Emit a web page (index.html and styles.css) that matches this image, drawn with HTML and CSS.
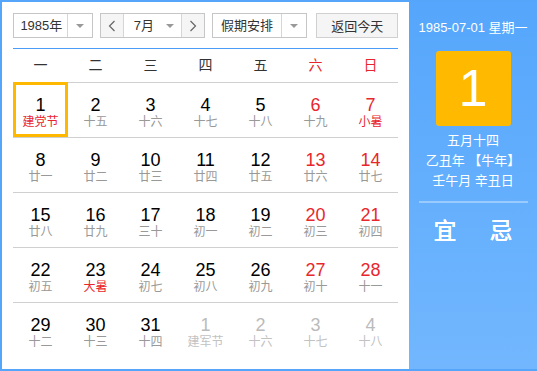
FILE: index.html
```html
<!DOCTYPE html>
<html lang="zh-CN">
<head>
    <meta charset="UTF-8">
    <meta name="viewport" content="width=device-width, initial-scale=1.0">
    <title>万年历</title>
    <link rel="stylesheet" href="styles.css">
</head>
<body>
    <div class="calendar">
        <div class="main">
            <div class="toolbar">
                <div class="select year-select">
                    <span class="select-text">1985年</span>
                    <span class="select-arrow"><i class="caret"></i></span>
                </div>
                <div class="month-group">
                    <button class="nav-btn">
                        <svg width="8" height="12" viewBox="0 0 8 12"><polyline points="6.5,1 1.5,6 6.5,11" fill="none" stroke="#666" stroke-width="1.2"/></svg>
                    </button>
                    <div class="month-select">
                        <span class="select-text">7月</span>
                        <i class="caret"></i>
                    </div>
                    <button class="nav-btn">
                        <svg width="8" height="12" viewBox="0 0 8 12"><polyline points="1.5,1 6.5,6 1.5,11" fill="none" stroke="#666" stroke-width="1.2"/></svg>
                    </button>
                </div>
                <div class="select holiday-select">
                    <span class="select-text">假期安排</span>
                    <span class="select-arrow"><i class="caret"></i></span>
                </div>
                <button class="today-btn">返回今天</button>
            </div>

            <div class="weekdays">
                <span>一</span><span>二</span><span>三</span><span>四</span><span>五</span>
                <span class="weekend">六</span><span class="weekend">日</span>
            </div>

            <div class="days">
                <div class="day today"><b>1</b><span class="lunar festival">建党节</span></div>
                <div class="day"><b>2</b><span class="lunar">十五</span></div>
                <div class="day"><b>3</b><span class="lunar">十六</span></div>
                <div class="day"><b>4</b><span class="lunar">十七</span></div>
                <div class="day"><b>5</b><span class="lunar">十八</span></div>
                <div class="day weekend"><b>6</b><span class="lunar">十九</span></div>
                <div class="day weekend"><b>7</b><span class="lunar festival">小暑</span></div>

                <div class="day"><b>8</b><span class="lunar">廿一</span></div>
                <div class="day"><b>9</b><span class="lunar">廿二</span></div>
                <div class="day"><b>10</b><span class="lunar">廿三</span></div>
                <div class="day"><b>11</b><span class="lunar">廿四</span></div>
                <div class="day"><b>12</b><span class="lunar">廿五</span></div>
                <div class="day weekend"><b>13</b><span class="lunar">廿六</span></div>
                <div class="day weekend"><b>14</b><span class="lunar">廿七</span></div>

                <div class="day"><b>15</b><span class="lunar">廿八</span></div>
                <div class="day"><b>16</b><span class="lunar">廿九</span></div>
                <div class="day"><b>17</b><span class="lunar">三十</span></div>
                <div class="day"><b>18</b><span class="lunar">初一</span></div>
                <div class="day"><b>19</b><span class="lunar">初二</span></div>
                <div class="day weekend"><b>20</b><span class="lunar">初三</span></div>
                <div class="day weekend"><b>21</b><span class="lunar">初四</span></div>

                <div class="day"><b>22</b><span class="lunar">初五</span></div>
                <div class="day"><b>23</b><span class="lunar festival">大暑</span></div>
                <div class="day"><b>24</b><span class="lunar">初七</span></div>
                <div class="day"><b>25</b><span class="lunar">初八</span></div>
                <div class="day"><b>26</b><span class="lunar">初九</span></div>
                <div class="day weekend"><b>27</b><span class="lunar">初十</span></div>
                <div class="day weekend"><b>28</b><span class="lunar">十一</span></div>

                <div class="day"><b>29</b><span class="lunar">十二</span></div>
                <div class="day"><b>30</b><span class="lunar">十三</span></div>
                <div class="day"><b>31</b><span class="lunar">十四</span></div>
                <div class="day other"><b>1</b><span class="lunar">建军节</span></div>
                <div class="day other"><b>2</b><span class="lunar">十六</span></div>
                <div class="day other"><b>3</b><span class="lunar">十七</span></div>
                <div class="day other"><b>4</b><span class="lunar">十八</span></div>
            </div>
        </div>

        <div class="side">
            <p class="side-date">1985-07-01 星期一</p>
            <div class="big-day">1</div>
            <p class="side-lunar">五月十四</p>
            <p class="side-lunar">乙丑年 【牛年】</p>
            <p class="side-lunar">壬午月 辛丑日</p>
            <div class="side-line"></div>
            <div class="yiji">
                <span>宜</span>
                <span>忌</span>
            </div>
        </div>
    </div>
</body>
</html>
```

FILE: styles.css
```css
body {
    margin: 0;
    padding: 0;
    font-family: "Liberation Sans", "Noto Sans CJK SC", sans-serif;
    background: #fff;
}
.calendar {
    display: flex;
    width: 537px;
    height: 371px;
    box-sizing: border-box;
    border: 2px solid #55a6fb;
    border-right: none;
    background: #fff;
}
.main {
    width: 407px;
    box-sizing: border-box;
    padding: 11px 11px 0 11px;
}
.toolbar {
    display: flex;
    height: 25px;
    padding-bottom: 10px;
    border-bottom: 1px solid #4a9cf6;
}
.select {
    display: flex;
    box-sizing: border-box;
    height: 25px;
    border: 1px solid #c6c6c6;
    background: #fff;
    font-size: 13px;
    color: #333;
}
.select-text {
    flex: 1;
    line-height: 23px;
    text-align: center;
}
.select-arrow {
    display: flex;
    align-items: center;
    justify-content: center;
    width: 24px;
    border-left: 1px solid #d6d6d6;
}
.caret {
    display: block;
    width: 0;
    height: 0;
    border-left: 4px solid transparent;
    border-right: 4px solid transparent;
    border-top: 4px solid #999;
}
.year-select {
    width: 80px;
}
.year-select .select-text {
    padding-left: 2px;
}
.month-group {
    display: flex;
    box-sizing: border-box;
    width: 105px;
    height: 25px;
    margin-left: 7px;
    border: 1px solid #c6c6c6;
}
.nav-btn {
    display: flex;
    align-items: center;
    justify-content: center;
    width: 22px;
    padding: 0;
    border: none;
    background: #f5f5f5;
}
.month-select {
    display: flex;
    align-items: center;
    width: 59px;
    box-sizing: border-box;
    padding: 0 7px 0 10px;
    border-left: 1px solid #d6d6d6;
    border-right: 1px solid #d6d6d6;
    background: #fff;
    font-size: 13px;
    color: #333;
}
.month-select .select-text {
    text-align: left;
}
.holiday-select {
    width: 96px;
    margin-left: 7px;
}
.today-btn {
    width: 82px;
    height: 25px;
    margin-left: 9px;
    padding: 0;
    border: 1px solid #d0d0d0;
    background: #f5f5f5;
    font-family: inherit;
    font-size: 13px;
    color: #333;
}
.weekdays {
    display: grid;
    grid-template-columns: repeat(7, 55px);
    height: 33px;
    line-height: 33px;
    text-align: center;
    font-size: 14px;
    color: #333;
}
.weekdays .weekend {
    color: #e8272d;
}
.days {
    display: grid;
    grid-template-columns: repeat(7, 55px);
    grid-auto-rows: 55px;
}
.day {
    display: flex;
    flex-direction: column;
    align-items: center;
    box-sizing: border-box;
    padding-top: 12px;
    border-top: 1px solid #d0d0d0;
}
.day b {
    font-weight: normal;
    font-size: 18px;
    line-height: 20px;
    color: #000;
}
.lunar {
    font-size: 12px;
    line-height: 15px;
    color: #999;
}
.lunar.festival {
    color: #e8272d;
}
.day.weekend b {
    color: #e8272d;
}
.day.other b {
    color: #bbb;
}
.day.other .lunar {
    color: #c2c2c2;
}
.day.today {
    padding-top: 10px;
    border: 3px solid #ffb800;
}
.side {
    flex: 1;
    display: flex;
    flex-direction: column;
    align-items: center;
    background: linear-gradient(#55a6fc, #72b7fe);
    color: #fff;
}
.side p {
    margin: 0;
}
.side-date {
    margin-top: 18px !important;
    font-size: 13px;
    line-height: 16px;
}
.big-day {
    width: 75px;
    height: 75px;
    margin-top: 15px;
    margin-bottom: 5px;
    border-radius: 3px;
    background: #ffba00;
    font-size: 52px;
    line-height: 75px;
    text-align: center;
}
.side-lunar {
    font-size: 13px;
    line-height: 20px;
}
.side-line {
    align-self: stretch;
    height: 2px;
    margin: 10px 9px 0 10px;
    background: rgba(255, 255, 255, 0.35);
}
.yiji {
    display: flex;
    gap: 33px;
    margin-top: 15px;
    font-size: 23px;
    line-height: 26px;
    font-weight: 500;
    text-shadow: 0 0 0.5px #fff;
}
```
